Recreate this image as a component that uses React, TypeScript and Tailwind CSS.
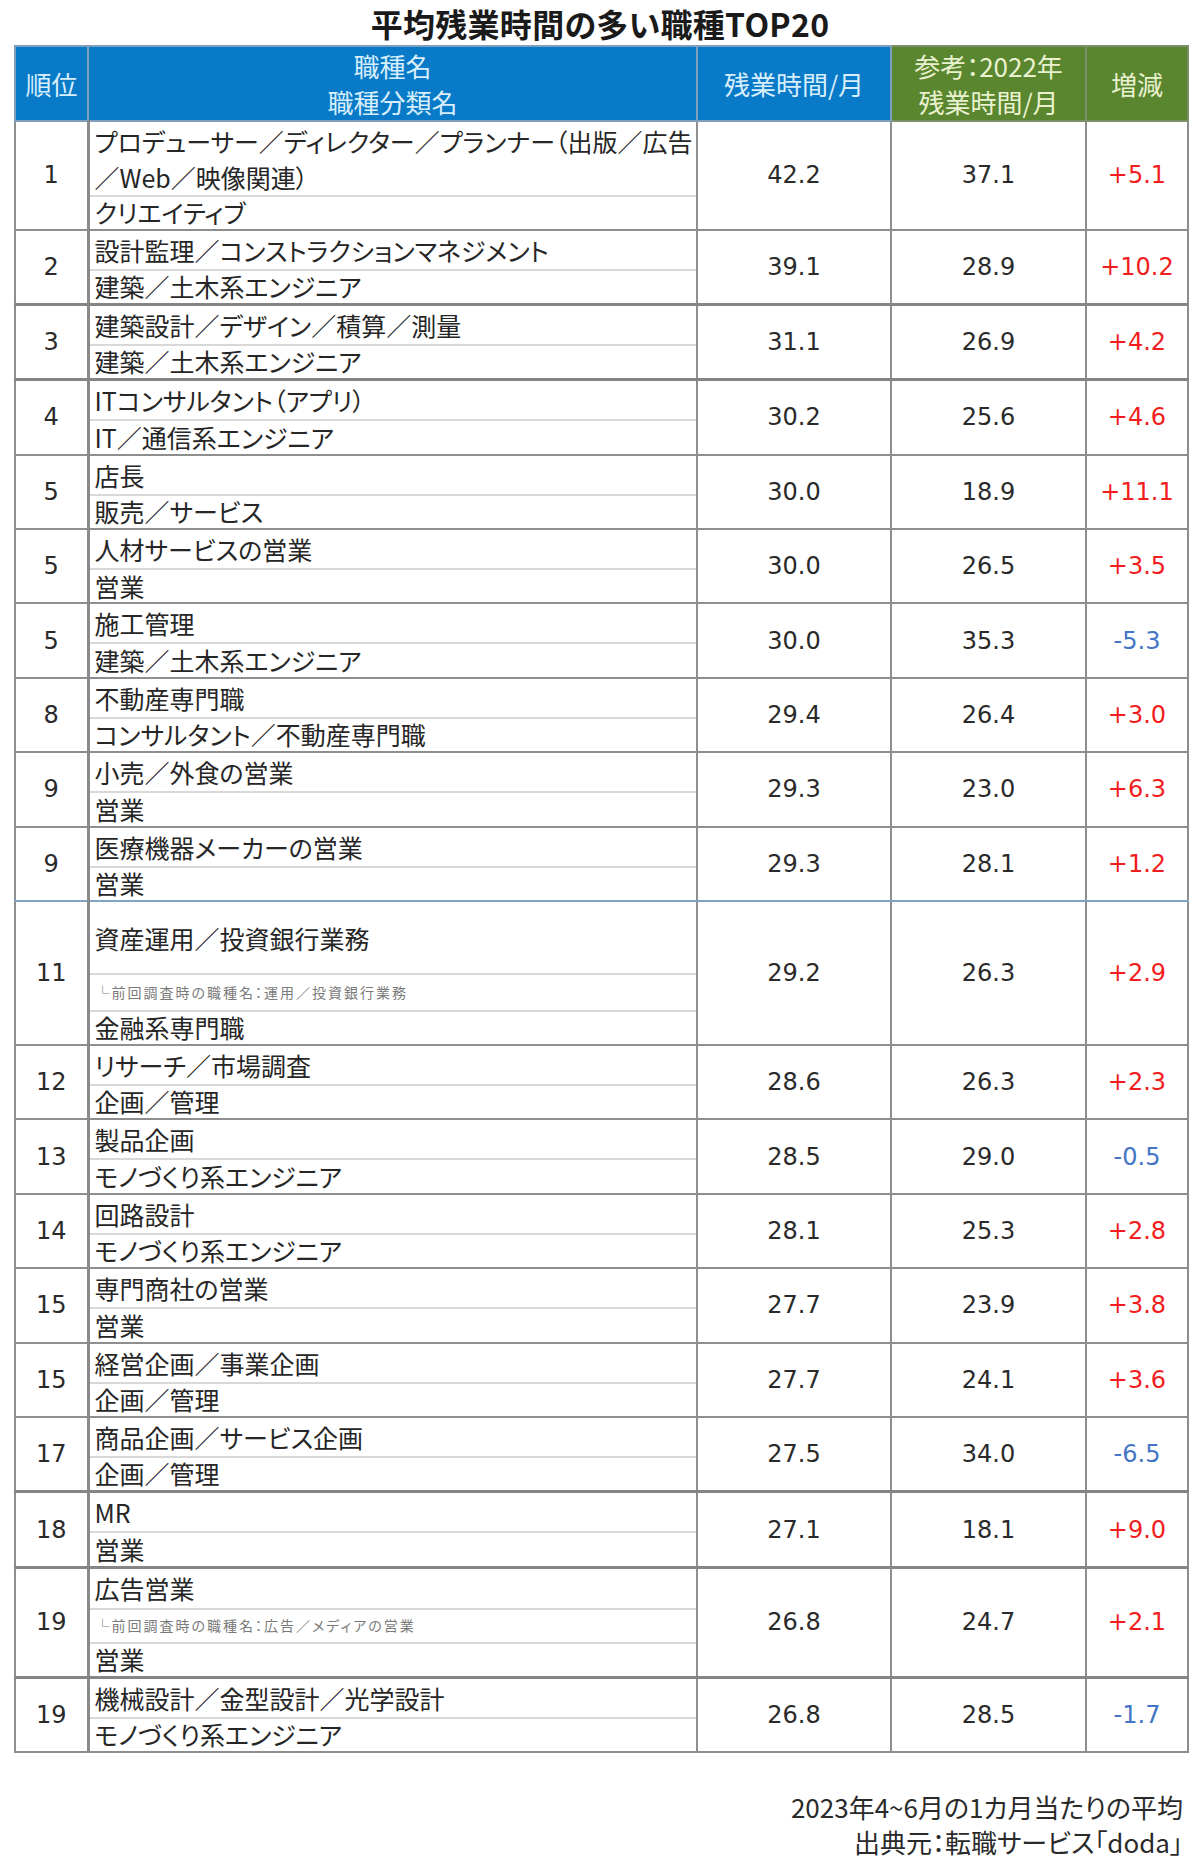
import React from "react";

type Row = {
  rank: string;
  name: string[];
  note?: string;
  cat: string;
  cur: string;
  prev: string;
  diff: string;
  nameH: number;
  noteH?: number;
  catH: number;
  bottom: "n" | "t" | "b";
};

const C = 34.4;

const rows: Row[] = [
  { rank: "1", name: ["プロデューサー／ディレクター／プランナー（出版／広告", "／Web／映像関連）"], cat: "クリエイティブ", cur: "42.2", prev: "37.1", diff: "+5.1", nameH: 73, catH: 33.5, bottom: "n" },
  { rank: "2", name: ["設計監理／コンストラクションマネジメント"], cat: "建築／土木系エンジニア", cur: "39.1", prev: "28.9", diff: "+10.2", nameH: 38, catH: C, bottom: "t" },
  { rank: "3", name: ["建築設計／デザイン／積算／測量"], cat: "建築／土木系エンジニア", cur: "31.1", prev: "26.9", diff: "+4.2", nameH: 38, catH: C, bottom: "t" },
  { rank: "4", name: ["ITコンサルタント（アプリ）"], cat: "IT／通信系エンジニア", cur: "30.2", prev: "25.6", diff: "+4.6", nameH: 38, catH: C, bottom: "n" },
  { rank: "5", name: ["店長"], cat: "販売／サービス", cur: "30.0", prev: "18.9", diff: "+11.1", nameH: 38, catH: C, bottom: "n" },
  { rank: "5", name: ["人材サービスの営業"], cat: "営業", cur: "30.0", prev: "26.5", diff: "+3.5", nameH: 38, catH: C, bottom: "n" },
  { rank: "5", name: ["施工管理"], cat: "建築／土木系エンジニア", cur: "30.0", prev: "35.3", diff: "-5.3", nameH: 38, catH: C, bottom: "n" },
  { rank: "8", name: ["不動産専門職"], cat: "コンサルタント／不動産専門職", cur: "29.4", prev: "26.4", diff: "+3.0", nameH: 38, catH: C, bottom: "n" },
  { rank: "9", name: ["小売／外食の営業"], cat: "営業", cur: "29.3", prev: "23.0", diff: "+6.3", nameH: 38, catH: C, bottom: "n" },
  { rank: "9", name: ["医療機器メーカーの営業"], cat: "営業", cur: "29.3", prev: "28.1", diff: "+1.2", nameH: 38, catH: C, bottom: "b" },
  { rank: "11", name: ["資産運用／投資銀行業務"], note: "└前回調査時の職種名：運用／投資銀行業務", cat: "金融系専門職", cur: "29.2", prev: "26.3", diff: "+2.9", nameH: 71, noteH: 37, catH: 34, bottom: "n" },
  { rank: "12", name: ["リサーチ／市場調査"], cat: "企画／管理", cur: "28.6", prev: "26.3", diff: "+2.3", nameH: 38, catH: C, bottom: "n" },
  { rank: "13", name: ["製品企画"], cat: "モノづくり系エンジニア", cur: "28.5", prev: "29.0", diff: "-0.5", nameH: 38, catH: C, bottom: "n" },
  { rank: "14", name: ["回路設計"], cat: "モノづくり系エンジニア", cur: "28.1", prev: "25.3", diff: "+2.8", nameH: 38, catH: C, bottom: "n" },
  { rank: "15", name: ["専門商社の営業"], cat: "営業", cur: "27.7", prev: "23.9", diff: "+3.8", nameH: 38, catH: C, bottom: "n" },
  { rank: "15", name: ["経営企画／事業企画"], cat: "企画／管理", cur: "27.7", prev: "24.1", diff: "+3.6", nameH: 38, catH: C, bottom: "n" },
  { rank: "17", name: ["商品企画／サービス企画"], cat: "企画／管理", cur: "27.5", prev: "34.0", diff: "-6.5", nameH: 38, catH: C, bottom: "t" },
  { rank: "18", name: ["MR"], cat: "営業", cur: "27.1", prev: "18.1", diff: "+9.0", nameH: 38, catH: C, bottom: "t" },
  { rank: "19", name: ["広告営業"], note: "└前回調査時の職種名：広告／メディアの営業", cat: "営業", cur: "26.8", prev: "24.7", diff: "+2.1", nameH: 39, noteH: 34, catH: 34, bottom: "t" },
  { rank: "19", name: ["機械設計／金型設計／光学設計"], cat: "モノづくり系エンジニア", cur: "26.8", prev: "28.5", diff: "-1.7", nameH: 38, catH: C, bottom: "n" },
];

const bottomCls = (b: Row["bottom"]) =>
  b === "t"
    ? "border-b-[3px] border-b-[#858585]"
    : b === "b"
    ? "border-b-2 border-b-[#7fa3c4]"
    : "border-b-2 border-b-[#8e8e8e]";

const numCls = "font-['DejaVu_Sans','Noto_Sans_CJK_JP',sans-serif] text-[24px] [font-feature-settings:normal]";

export default function App() {
  return (
    <div className="w-[1200px] h-[1865px] bg-white font-['Noto_Sans_CJK_JP',sans-serif] text-[#222] [font-feature-settings:'palt']">
      <div className="h-[45px] flex items-center justify-center">
        <h1 className="text-[32px] font-bold leading-none text-[#1a1a1a] tracking-[0.3px]">平均残業時間の多い職種TOP20</h1>
      </div>
      <div className="pl-[14px]">
        <table className="table-fixed w-[1173px] border-collapse border-2 border-[#8e8e8e]">
          <colgroup>
            <col className="w-[73px]" />
            <col className="w-[609px]" />
            <col className="w-[194px]" />
            <col className="w-[195px]" />
            <col className="w-[102px]" />
          </colgroup>
          <thead>
            <tr className="h-[75px] text-[26px] leading-[36px] font-normal">
              <th className="bg-[#087ac8] text-[#d7eefc] font-normal border-2 border-[#7f9fbd] p-0">順位</th>
              <th className="bg-[#087ac8] text-[#d7eefc] font-normal border-2 border-[#7f9fbd] p-0">
                職種名
                <br />
                職種分類名
              </th>
              <th className="bg-[#087ac8] text-[#d7eefc] font-normal border-2 border-[#7f9fbd] p-0">残業時間/月</th>
              <th className="bg-[#5a8630] text-[#e9f1cf] font-normal border-2 border-[#7c8f6a] p-0">
                参考：2022年
                <br />
                残業時間/月
              </th>
              <th className="bg-[#5a8630] text-[#e9f1cf] font-normal border-2 border-[#7c8f6a] p-0">増減</th>
            </tr>
          </thead>
          <tbody>
            {rows.map((r, i) => {
              const b = bottomCls(r.bottom);
              const diffColor = r.diff.startsWith("-") ? "text-[#4475c6]" : "text-[#f21d1d]";
              return (
                <tr key={i}>
                  <td className={`border-l-2 border-l-[#8e8e8e] border-r-[3px] border-r-[#8a8a8a] ${b} text-center ${numCls} text-[#2a2a2a] p-0`}>{r.rank}</td>
                  <td className={`border-x-2 border-x-[#8e8e8e] ${b} p-0 align-top`}>
                    <div className="flex flex-col">
                      <div
                        className="flex items-center pl-[5px] text-[25px] leading-[36px] text-[#262626] whitespace-nowrap"
                        style={{ height: r.nameH }}
                      >
                        <div>
                          {r.name.map((n, j) => (
                            <div key={j}>{n}</div>
                          ))}
                        </div>
                      </div>
                      {r.note && (
                        <div
                          className="flex items-center pl-[6px] border-t-2 border-[#d8d8d8] text-[14px] tracking-[2px] text-[#7a7a7a] whitespace-nowrap"
                          style={{ height: r.noteH }}
                        >
                          {r.note}
                        </div>
                      )}
                      <div
                        className="flex items-center pl-[5px] border-t-2 border-[#d8d8d8] text-[25px] text-[#262626] whitespace-nowrap"
                        style={{ height: r.catH }}
                      >
                        {r.cat}
                      </div>
                    </div>
                  </td>
                  <td className={`border-x-2 border-x-[#8e8e8e] ${b} text-center ${numCls} text-[#2a2a2a] p-0`}>{r.cur}</td>
                  <td className={`border-x-2 border-x-[#8e8e8e] ${b} text-center ${numCls} text-[#2a2a2a] p-0`}>{r.prev}</td>
                  <td className={`border-x-2 border-x-[#8e8e8e] ${b} text-center ${numCls} ${diffColor} p-0`}>{r.diff}</td>
                </tr>
              );
            })}
          </tbody>
        </table>
      </div>
      <div className="mt-[36px] pr-[17px] text-right text-[26px] leading-[35px] text-[#2a2a2a]">
        <div>2023年4~6月の1カ月当たりの平均</div>
        <div>出典元：転職サービス「doda」</div>
      </div>
    </div>
  );
}
